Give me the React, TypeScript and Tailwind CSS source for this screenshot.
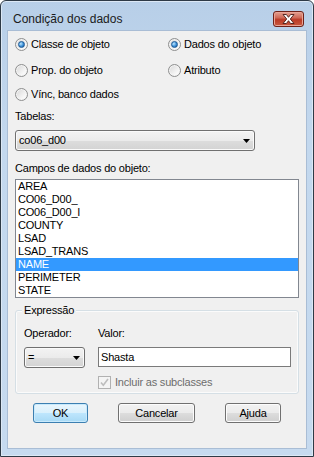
import React from 'react'

function Radio({ checked }: { checked?: boolean }) {
  return (
    <span className="flex h-[13px] w-[13px] shrink-0 items-center justify-center rounded-full border border-[#8e8f8f] bg-[linear-gradient(135deg,#d6d6d6,#f7f7f7_70%,#ffffff)] shadow-[inset_0_0_0_1px_#f4f4f4]">
      {checked && (
        <span className="h-[7px] w-[7px] rounded-full border border-[#1c5a96] bg-[radial-gradient(circle_at_35%_35%,#bfe8ff,#3a8fd8_55%,#1a4f8a)]" />
      )}
    </span>
  )
}

function RadioItem({ label, checked }: { label: string; checked?: boolean }) {
  return (
    <div className="flex h-[16px] items-center gap-[3px]">
      <Radio checked={checked} />
      <span className="leading-[13px]">{label}</span>
    </div>
  )
}

function Arrow() {
  return (
    <svg width="7" height="4" viewBox="0 0 7 4">
      <path d="M0 0h7L3.5 4z" fill="#000" />
    </svg>
  )
}

function Combo({ value, className }: { value: string; className: string }) {
  return (
    <div
      className={`flex h-[21px] items-center justify-between rounded-[3px] border border-[#707070] bg-[linear-gradient(#f3f3f3,#ebebeb_50%,#dddddd_51%,#d3d3d3)] pl-[3px] pr-[4px] shadow-[inset_0_0_0_1px_#fafafa] ${className}`}
    >
      <span className="leading-[13px]">{value}</span>
      <Arrow />
    </div>
  )
}

function Button({ label, width, primary }: { label: string; width: string; primary?: boolean }) {
  return (
    <button
      type="button"
      className={`flex h-[20px] items-center justify-center rounded-[3px] border ${width} ${
        primary
          ? 'border-[#3c7fb1] bg-[linear-gradient(#eaf6fd,#d9f0fc_50%,#bee6fd_51%,#a7d9f5)] shadow-[inset_0_0_0_1px_#c9eafc]'
          : 'border-[#707070] bg-[linear-gradient(#f2f2f2,#ebebeb_50%,#dddddd_51%,#cfcfcf)] shadow-[inset_0_0_0_1px_#fcfcfc]'
      }`}
    >
      {label}
    </button>
  )
}

const fields = ['AREA', 'CO06_D00_', 'CO06_D00_I', 'COUNTY', 'LSAD', 'LSAD_TRANS', 'NAME', 'PERIMETER', 'STATE']

export default function App() {
  return (
    <div className="h-[457px] w-[314px] overflow-hidden bg-white font-['Liberation_Sans',Arial,sans-serif] text-[11px] tracking-[-0.2px] text-black">
      <div className="flex h-full w-full flex-col rounded-t-[6px] border border-[#2e3a46] bg-[linear-gradient(#b8cfe8,#c3d8ee_30%,#c6daef)] shadow-[inset_0_0_0_1px_#dce8f5]">
        {/* title bar */}
        <div className="flex h-[29px] shrink-0 items-center justify-between pl-[12px] pr-[9px] pt-[6px]">
          <span className="text-[12px] leading-[16px] tracking-normal text-[#1b1b1b]">Condição dos dados</span>
          <div className="flex h-[16px] w-[31px] items-center justify-center rounded-[3px] border border-[#6e2219] bg-[linear-gradient(#e3a192,#cf6a58_40%,#bb3a26_55%,#c85a40)] shadow-[inset_0_0_0_1px_#e9a496]">
            <svg width="13" height="10" viewBox="0 0 13 10">
              <path
                d="M1 0.5h3.4L6.5 3.3 8.6 0.5H12L8.3 5 12 9.5H8.6L6.5 6.7 4.4 9.5H1L4.7 5z"
                fill="#ffffff"
                stroke="#4a1c16"
                strokeWidth="0.9"
              />
            </svg>
          </div>
        </div>

        {/* client area */}
        <div className="mx-[6px] flex flex-1 flex-col border border-[#a9bdd5] bg-[#f0f0f0] pl-[7px] pr-[6px]">
          <div className="mt-[5px] grid grid-cols-[153px_1fr]">
            <RadioItem label="Classe de objeto" checked />
            <RadioItem label="Dados do objeto" checked />
          </div>
          <div className="mt-[10px] grid grid-cols-[153px_1fr]">
            <RadioItem label="Prop. do objeto" />
            <RadioItem label="Atributo" />
          </div>
          <div className="mt-[8px]">
            <RadioItem label="Vínc, banco dados" />
          </div>

          <div className="mt-[8px] h-[13px] leading-[13px]">Tabelas:</div>
          <Combo value="co06_d00" className="mt-[7px] w-[240px]" />

          <div className="mt-[11px] h-[13px] leading-[13px]">Campos de dados do objeto:</div>
          <div className="mt-[4px] h-[119px] w-[284px] border border-[#828790] bg-white">
            {fields.map((f) => (
              <div
                key={f}
                className={`h-[13px] pl-[2px] leading-[13px] ${f === 'NAME' ? 'bg-[#3399ff] text-white' : ''}`}
              >
                {f}
              </div>
            ))}
          </div>

          {/* Expressão group */}
          <div className="relative mt-[12px] h-[84px] w-[284px] rounded-[3px] border border-[#d5dfe5] pl-[8px] pt-[16px] shadow-[inset_0_0_0_1px_#fbfbfb]">
            <span className="absolute -top-[7px] left-[6px] bg-[#f0f0f0] px-[2px] leading-[13px]">Expressão</span>
            <div className="flex">
              <div className="flex w-[74px] flex-col">
                <span className="h-[13px] leading-[13px]">Operador:</span>
                <Combo value="=" className="mt-[7px] w-[61px]" />
              </div>
              <div className="flex flex-col">
                <span className="h-[13px] leading-[13px]">Valor:</span>
                <div className="mt-[7px] flex h-[20px] w-[193px] items-center border border-[#7a7a7a] bg-white pl-[2px]">
                  Shasta
                </div>
                <div className="mt-[9px] flex items-center gap-[4px]">
                  <span className="flex h-[13px] w-[13px] items-center justify-center border border-[#b1b1b1] bg-[#f4f4f4]">
                    <svg width="9" height="9" viewBox="0 0 9 9">
                      <path d="M1 4.5l2.3 2.7L8 1" fill="none" stroke="#bdbdbd" strokeWidth="1.6" />
                    </svg>
                  </span>
                  <span className="leading-[13px] text-[#6d6d6d]">Incluir as subclasses</span>
                </div>
              </div>
            </div>
          </div>

          {/* buttons */}
          <div className="mt-[9px] flex pl-[18px]">
            <Button label="OK" width="w-[55px]" primary />
            <div className="ml-[30px]">
              <Button label="Cancelar" width="w-[77px]" />
            </div>
            <div className="ml-[30px]">
              <Button label="Ajuda" width="w-[56px]" />
            </div>
          </div>
        </div>
        <div className="h-[7px] shrink-0" />
      </div>
    </div>
  )
}
